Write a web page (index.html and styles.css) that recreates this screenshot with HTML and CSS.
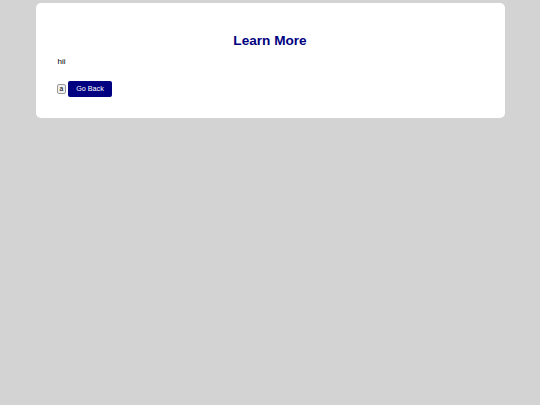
FILE: index.html
```html
<!DOCTYPE html>
<html>
<head>
<meta charset="utf-8">
<link rel="stylesheet" href="styles.css">
</head>
<body>
<div class="card">
  <h1 class="title">Learn More</h1>
  <p class="text">hii</p>
  <div class="actions">
    <button class="small-btn">a</button>
    <button class="back-btn">Go Back</button>
  </div>
</div>
</body>
</html>
```
FILE: styles.css
```css
html, body {
  margin: 0;
  padding: 0;
  background: #d3d3d3;
  font-family: "Liberation Sans", Arial, sans-serif;
}
.card {
  width: 469px;
  box-sizing: border-box;
  margin: 3px auto 0;
  background: #ffffff;
  border-radius: 5px;
  padding: 30px 21px 21px;
}
.title {
  margin: 0;
  text-align: center;
  color: #000080;
  font-size: 13.6px;
  font-weight: bold;
  line-height: 16px;
}
.text {
  margin: 8px 0 0 1px;
  font-size: 8px;
  line-height: 10px;
  color: #000;
}
.actions {
  margin-top: 14px;
  display: flex;
  align-items: center;
  gap: 2px;
}
.small-btn {
  font-family: "Liberation Sans", Arial, sans-serif;
  font-size: 6.7px;
  padding: 1px 2px;
  background: #efefef;
  border: 1px solid #9a9a9a;
  border-radius: 2px;
  line-height: 6px;
  color: #000;
}
.back-btn {
  font-family: "Liberation Sans", Arial, sans-serif;
  font-size: 7.2px;
  line-height: 8px;
  padding: 4px 8px;
  background: #000080;
  color: #fff;
  border: none;
  border-radius: 2px;
}
```
